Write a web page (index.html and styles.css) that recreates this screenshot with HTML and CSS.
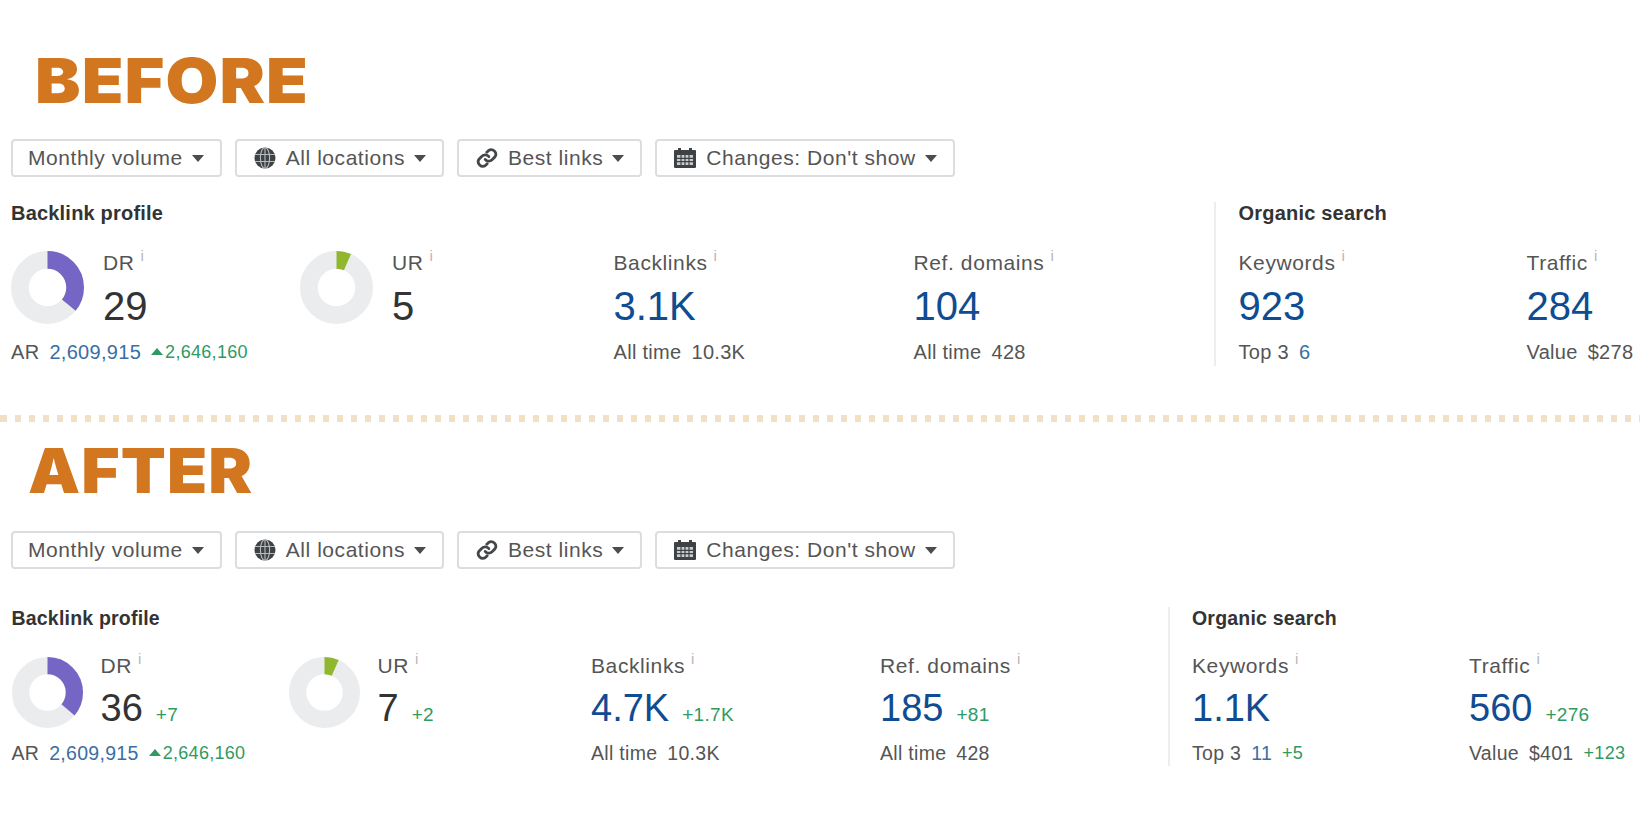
FILE: index.html
```html
<!DOCTYPE html>
<html lang="en">
<head>
<meta charset="utf-8">
<title>Before and after</title>
<link rel="stylesheet" href="styles.css">
</head>
<body>
<section class="panel before">
  <h1 class="stage">BEFORE</h1>
  <div class="toolbar">
    <button class="btn">Monthly volume<i class="caret"></i></button>
    <button class="btn"><svg class="ico" viewBox="0 0 22 22"><circle cx="11" cy="11" r="10.5" fill="#3f4245"/><g fill="none" stroke="#b9bcbf" stroke-width="1.1"><ellipse cx="11" cy="11" rx="4.6" ry="10.5"/><path d="M11 .5v21M1 7.5h20M1 14.5h20"/></g></svg>All locations<i class="caret"></i></button>
    <button class="btn"><svg class="ico" viewBox="0 0 24 24" fill="none" stroke="#44474a" stroke-width="3" stroke-linecap="round"><path d="M10 13.5a5 5 0 0 0 7.5.5l3-3a5 5 0 0 0-7-7l-1.7 1.7"/><path d="M14 10.5a5 5 0 0 0-7.5-.5l-3 3a5 5 0 0 0 7 7l1.7-1.7"/></svg>Best links<i class="caret"></i></button>
    <button class="btn"><svg class="ico" viewBox="0 0 22 22"><path fill="#3f4245" d="M4 1h3v2h8V1h3v2h3a1 1 0 0 1 1 1v16a1 1 0 0 1-1 1H1a1 1 0 0 1-1-1V4a1 1 0 0 1 1-1h3z"/><path fill="#c9cccf" d="M3 8h16v10H3z"/><path stroke="#3f4245" stroke-width="1.2" d="M7 8v10M11 8v10M15 8v10M3 11.3h16M3 14.7h16"/></svg>Changes: Don't show<i class="caret"></i></button>
  </div>
  <div class="metrics">
    <div class="group backlink">
      <h2 class="title">Backlink profile</h2>
      <div class="cols">
        <div class="rating">
          <svg class="donut" viewBox="0 0 74 74"><circle class="track" cx="37" cy="37" r="28"/><circle class="arc purple" cx="37" cy="37" r="28" pathLength="100" stroke-dasharray="36 100"/></svg>
          <div class="label">DR<sup class="info">i</sup></div>
          <div class="value dark">29</div>
          <div class="sub foot"><span>AR</span><span class="link">2,609,915</span><span class="rank"><i class="up"></i>2,646,160</span></div>
        </div>
        <div class="rating">
          <svg class="donut" viewBox="0 0 74 74"><circle class="track" cx="37" cy="37" r="28"/><circle class="arc green" cx="37" cy="37" r="28" pathLength="100" stroke-dasharray="6.5 100"/></svg>
          <div class="label">UR<sup class="info">i</sup></div>
          <div class="value dark">5</div>
        </div>
        <div class="metric">
          <div class="label">Backlinks<sup class="info">i</sup></div>
          <div class="value">3.1K</div>
          <div class="sub"><span>All time</span><span>10.3K</span></div>
        </div>
        <div class="metric">
          <div class="label">Ref. domains<sup class="info">i</sup></div>
          <div class="value">104</div>
          <div class="sub"><span>All time</span><span>428</span></div>
        </div>
      </div>
    </div>
    <div class="group organic">
      <h2 class="title">Organic search</h2>
      <div class="cols">
        <div class="metric">
          <div class="label">Keywords<sup class="info">i</sup></div>
          <div class="value">923</div>
          <div class="sub"><span>Top 3</span><span class="link">6</span></div>
        </div>
        <div class="metric">
          <div class="label">Traffic<sup class="info">i</sup></div>
          <div class="value">284</div>
          <div class="sub"><span>Value</span><span>$278</span></div>
        </div>
      </div>
    </div>
  </div>
</section>
<div class="dots"></div>
<section class="panel after">
  <h1 class="stage">AFTER</h1>
  <div class="toolbar">
    <button class="btn">Monthly volume<i class="caret"></i></button>
    <button class="btn"><svg class="ico" viewBox="0 0 22 22"><circle cx="11" cy="11" r="10.5" fill="#3f4245"/><g fill="none" stroke="#b9bcbf" stroke-width="1.1"><ellipse cx="11" cy="11" rx="4.6" ry="10.5"/><path d="M11 .5v21M1 7.5h20M1 14.5h20"/></g></svg>All locations<i class="caret"></i></button>
    <button class="btn"><svg class="ico" viewBox="0 0 24 24" fill="none" stroke="#44474a" stroke-width="3" stroke-linecap="round"><path d="M10 13.5a5 5 0 0 0 7.5.5l3-3a5 5 0 0 0-7-7l-1.7 1.7"/><path d="M14 10.5a5 5 0 0 0-7.5-.5l-3 3a5 5 0 0 0 7 7l1.7-1.7"/></svg>Best links<i class="caret"></i></button>
    <button class="btn"><svg class="ico" viewBox="0 0 22 22"><path fill="#3f4245" d="M4 1h3v2h8V1h3v2h3a1 1 0 0 1 1 1v16a1 1 0 0 1-1 1H1a1 1 0 0 1-1-1V4a1 1 0 0 1 1-1h3z"/><path fill="#c9cccf" d="M3 8h16v10H3z"/><path stroke="#3f4245" stroke-width="1.2" d="M7 8v10M11 8v10M15 8v10M3 11.3h16M3 14.7h16"/></svg>Changes: Don't show<i class="caret"></i></button>
  </div>
  <div class="metrics">
    <div class="group backlink">
      <h2 class="title">Backlink profile</h2>
      <div class="cols">
        <div class="rating">
          <svg class="donut" viewBox="0 0 74 74"><circle class="track" cx="37" cy="37" r="28"/><circle class="arc purple" cx="37" cy="37" r="28" pathLength="100" stroke-dasharray="36 100"/></svg>
          <div class="label">DR<sup class="info">i</sup></div>
          <div class="value dark">36<span class="delta">+7</span></div>
          <div class="sub foot"><span>AR</span><span class="link">2,609,915</span><span class="rank"><i class="up"></i>2,646,160</span></div>
        </div>
        <div class="rating">
          <svg class="donut" viewBox="0 0 74 74"><circle class="track" cx="37" cy="37" r="28"/><circle class="arc green" cx="37" cy="37" r="28" pathLength="100" stroke-dasharray="6.5 100"/></svg>
          <div class="label">UR<sup class="info">i</sup></div>
          <div class="value dark">7<span class="delta">+2</span></div>
        </div>
        <div class="metric">
          <div class="label">Backlinks<sup class="info">i</sup></div>
          <div class="value">4.7K<span class="delta">+1.7K</span></div>
          <div class="sub"><span>All time</span><span>10.3K</span></div>
        </div>
        <div class="metric">
          <div class="label">Ref. domains<sup class="info">i</sup></div>
          <div class="value">185<span class="delta">+81</span></div>
          <div class="sub"><span>All time</span><span>428</span></div>
        </div>
      </div>
    </div>
    <div class="group organic">
      <h2 class="title">Organic search</h2>
      <div class="cols">
        <div class="metric">
          <div class="label">Keywords<sup class="info">i</sup></div>
          <div class="value">1.1K</div>
          <div class="sub"><span>Top 3</span><span class="link">11</span><span class="rank">+5</span></div>
        </div>
        <div class="metric">
          <div class="label">Traffic<sup class="info">i</sup></div>
          <div class="value">560<span class="delta">+276</span></div>
          <div class="sub"><span>Value</span><span>$401</span><span class="rank">+123</span></div>
        </div>
      </div>
    </div>
  </div>
</section>
</body>
</html>
```
FILE: styles.css
```css
* { box-sizing: border-box; }
html, body { margin: 0; padding: 0; }
body {
  width: 1640px;
  height: 840px;
  overflow: hidden;
  background: #fff;
  font-family: "Liberation Sans", Arial, sans-serif;
  color: #555;
}
.panel { padding-left: 11px; }
.stage {
  width: fit-content;
  margin: 0;
  font-family: Inter, sans-serif;
  font-weight: 900;
  font-size: 62px;
  line-height: 48px;
  height: 48px;
  color: #d2761f;
  letter-spacing: 1px;
  transform-origin: left center;
}
.before .stage { margin: 57px 0 34px 24px; transform: scaleX(1.1); }
.after .stage { margin: 25px 0 36px 16px; transform: scaleX(1.06); }

.toolbar { display: flex; gap: 13px; }
.after .toolbar { margin-left: -.5px; }
.btn {
  display: flex;
  align-items: center;
  height: 38px;
  padding: 0 16px 0 15px;
  background: #fff;
  border: 2px solid #dcdddf;
  border-radius: 4px;
  font: 21px "Liberation Sans", Arial, sans-serif;
  letter-spacing: .55px;
  color: #555;
}
.ico { width: 22px; height: 22px; margin: 0 10px 0 2px; flex: none; }
.caret {
  width: 0;
  height: 0;
  margin-left: 9px;
  border-style: solid;
  border-width: 7px 6px 0;
  border-color: #4a4c4f transparent transparent;
}

.metrics { display: flex; }
.before .metrics { margin-top: 25px; height: 164px; }
.after .metrics { margin-top: 38px; height: 159px; }
.group { display: flex; flex-direction: column; }
.title {
  margin: 0;
  font-size: 20px;
  line-height: 22px;
  font-weight: 700;
  letter-spacing: .2px;
  color: #333;
}
.after .title { font-size: 19.5px; }
.organic { border-left: 2px solid #eeeeee; padding-left: 23px; }
.cols { display: grid; margin-top: 24px; }
.before .backlink .cols { grid-template-columns: 289px 313.5px 300px 300px; }
.before .organic .cols { grid-template-columns: 288px 110px; }
.after .backlink .cols { grid-template-columns: 277px 302.5px 289px 288px; }
.after .organic .cols { grid-template-columns: 277px 160px; }
.after .cols { margin-top: 23px; }
.after { padding-left: 11.5px; }
.after .organic { padding-left: 22px; }

.label {
  font-size: 21px;
  line-height: 28px;
  letter-spacing: .6px;
  white-space: nowrap;
}
.before .label { padding-top: 1px; }
.info {
  margin-left: 6px;
  font-size: 15px;
  line-height: 0;
  color: #b5b7ba;
  vertical-align: 9px;
}
.value {
  display: flex;
  align-items: baseline;
  font-size: 40px;
  line-height: 60px;
  color: #0f4c92;
  white-space: nowrap;
}
.before .value { line-height: 59px; }
.after .value { font-size: 38px; line-height: 56px; }
.dark { color: #333; }
.delta {
  margin-left: 13px;
  font-size: 19px;
  line-height: 1;
  letter-spacing: .3px;
  color: #2f9a62;
}
.sub {
  display: flex;
  gap: 10px;
  margin-top: 2px;
  font-size: 20px;
  line-height: 28px;
  letter-spacing: .3px;
  white-space: nowrap;
}
.after .sub { margin-top: 3px; font-size: 19.5px; }
.link { color: #3a6ea5; }
.rank { color: #2f9a62; font-size: 18px; }
.up {
  display: inline-block;
  margin-right: 2px;
  vertical-align: 3px;
  border-style: solid;
  border-width: 0 6px 7px;
  border-color: transparent transparent #2f9a62;
}

.rating {
  display: grid;
  grid-template-columns: 73px 1fr;
  column-gap: 19px;
  align-content: start;
}
.after .rating { grid-template-columns: 71px 1fr; column-gap: 18px; }
.donut { grid-row: 1 / 3; width: 73px; height: 73px; align-self: start; margin-top: 3px; }
.after .donut { width: 71px; height: 71px; margin-top: 5px; }
.foot { grid-column: 1 / 3; }
.track, .arc { fill: none; stroke-width: 18; }
.track { stroke: #eaecee; }
.arc { transform: rotate(-90deg); transform-origin: 37px 37px; }
.purple { stroke: #7565c4; }
.green { stroke: #8fb82f; }

.dots {
  height: 7px;
  margin-top: 49px;
  background: repeating-linear-gradient(90deg, #f1dfc6 0 6px, transparent 6px 14px) 1px 0;
}
```
